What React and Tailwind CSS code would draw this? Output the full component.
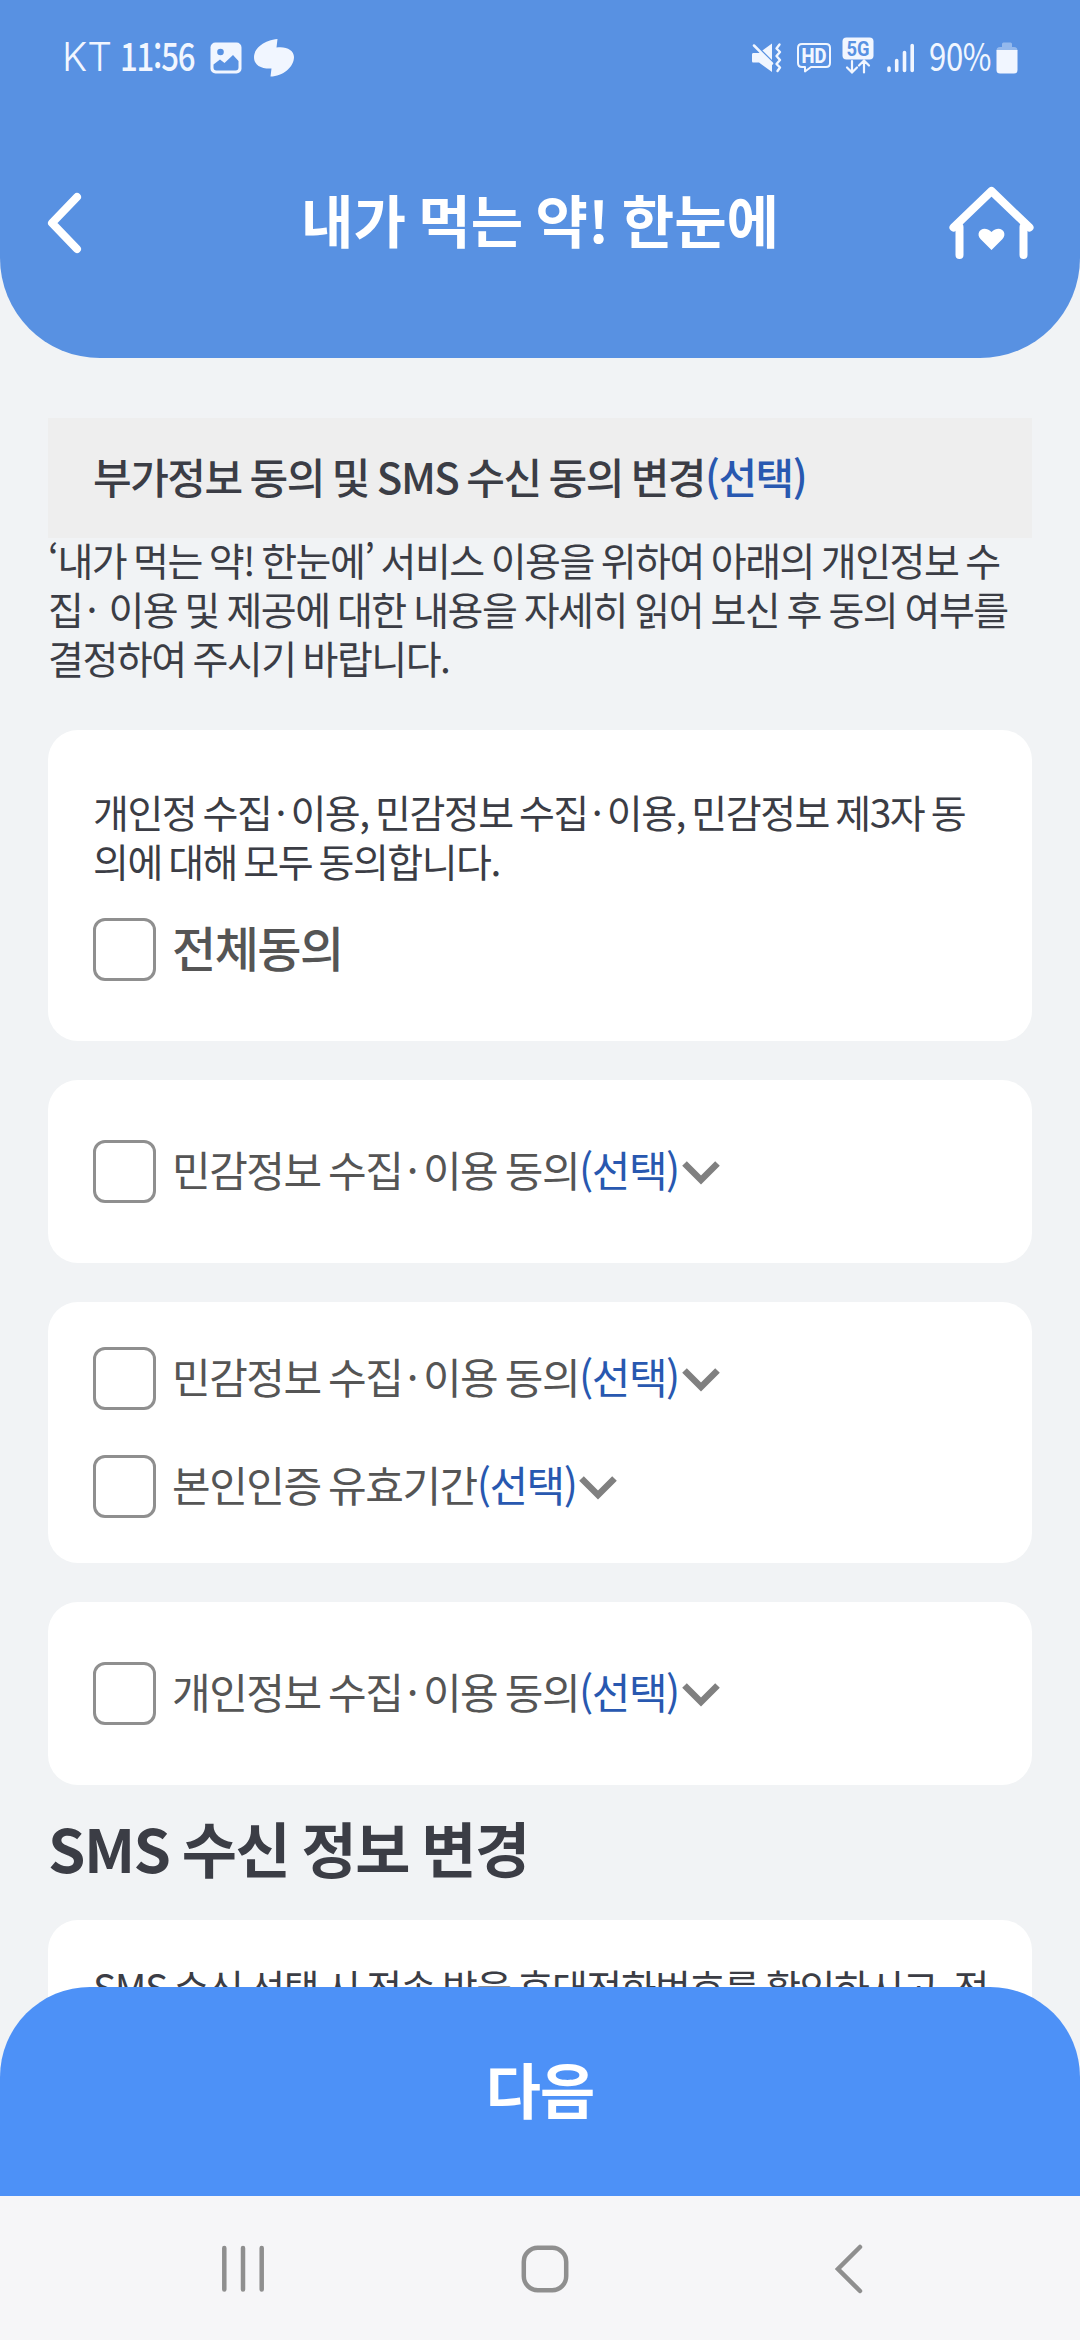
import { useState } from 'react';

const agreements = [
  {
    id: 'sensitive',
    items: [{ id: 'sensitive-1', parts: ['민감정보 수집', '이용 동의'] }],
  },
  {
    id: 'identity',
    items: [
      { id: 'sensitive-2', parts: ['민감정보 수집', '이용 동의'] },
      { id: 'valid-period', parts: ['본인인증 유효기간'] },
    ],
  },
  {
    id: 'personal',
    items: [{ id: 'personal-1', parts: ['개인정보 수집', '이용 동의'] }],
  },
];

const MutedIcon = () => (
  <svg width="32" height="32" viewBox="0 0 32 32" fill="none">
    <path d="M2 11H8L21 1.5V30L8 20.5H2Q1 20.5 1 19V12.500Q1 11 2 11Z" fill="currentColor" />
    <path d="M1 0L24 23" stroke="#5891e2" strokeWidth="3" />
    <path d="M3 3.500L21 21.500" stroke="currentColor" strokeWidth="2.500" strokeLinecap="round" />
    <path d="M28.500 2.500L25.500 6.500L29 10L25.500 14L29 18L25.500 22L29 25.500L26.500 29" stroke="currentColor" strokeWidth="2.400" strokeLinejoin="round" strokeLinecap="round" />
  </svg>
);

const HdIcon = () => (
  <svg width="36" height="32" viewBox="0 0 36 32">
    <path d="M6 2H30Q34 2 34 6V21Q34 25 30 25H15L9 29.500V25H6Q2 25 2 21V6Q2 2 6 2Z" fill="none" stroke="currentColor" strokeWidth="2" strokeLinejoin="round" />
    <text x="18" y="20.500" textAnchor="middle" fontFamily="Roboto, sans-serif" fontWeight="800" fontSize="20" textLength="25" lengthAdjust="spacingAndGlyphs" fill="currentColor">HD</text>
  </svg>
);

const FiveGIcon = () => (
  <svg width="32" height="38" viewBox="0 0 32 38">
    <rect x="0.500" y="0.500" width="31" height="22" rx="4" fill="currentColor" />
    <text x="16" y="18.500" textAnchor="middle" fontFamily="Roboto, sans-serif" fontWeight="700" fontSize="20" textLength="23" lengthAdjust="spacingAndGlyphs" fill="#5891e2">5G</text>
    <path d="M10 24V35M5 30.500L10 35.500L15 30.500M22 35.500V24M17 28.500L22 23.500L27 28.500" fill="none" stroke="currentColor" strokeWidth="2.200" strokeLinecap="round" />
  </svg>
);

const StatusBar = () => (
  <div className="flex h-[114px] items-center pt-[1px] pl-[62px] text-[#f1f6ff]">
    <span className="mb-[2px] w-[58px] font-[Inter] text-[39px] leading-none font-light">KT</span>
    <span className="mb-[5px] w-[90px] origin-left scale-x-[0.82] text-[38px] leading-none font-medium tracking-[-1.500px] whitespace-nowrap">11:56</span>
    <svg className="mt-[1px]" width="32" height="32" viewBox="0 0 32 32">
      <rect x="0.500" y="0.500" width="31" height="31" rx="5" fill="currentColor" />
      <circle cx="10.500" cy="10" r="3.300" fill="#5891e2" />
      <path d="M3.500 22.500L10 17.500L14.500 21L23 13L28.500 19V25.500Q28.500 28.500 25.500 28.500H6.500Q3.500 28.500 3.500 25.500Z" fill="#5891e2" />
    </svg>
    <svg className="ml-[12px]" width="40" height="38" viewBox="0 0 40 38">
      <path d="M23.500 0L22.500 8.500C32 7 40 11 40 18C40 28 29 37.500 16.500 37.500L17.500 29.500C8 30 0 27 0 18C0 9 11 1 23.500 0Z" fill="currentColor" />
    </svg>
    <div className="ml-auto flex items-center">
      <MutedIcon />
      <span className="ml-[13px]"><HdIcon /></span>
      <span className="ml-[10px] -mt-[4px]"><FiveGIcon /></span>
      <svg className="ml-[13px]" width="28" height="30" viewBox="0 0 28 30" stroke="currentColor" strokeWidth="3.600" strokeLinecap="round">
        <path d="M2 25V27.500M9.700 17.500V27.500M17.500 9.500V27.500M25.200 2.500V27.500" />
      </svg>
      <span className="mb-[5px] ml-[14px] w-[67px] origin-left scale-x-[0.82] text-[38px] leading-none tracking-[-0.500px] whitespace-nowrap">90%</span>
      <svg className="mr-[62px]" width="22" height="32" viewBox="0 0 22 32">
        <path d="M6 5V2Q6 0.500 7.500 0.500H14.500Q16 0.500 16 2V5H18Q21.500 5 21.500 8.500H0.500Q0.500 5 4 5Z" fill="currentColor" opacity="0.400" />
        <path d="M0.500 8H21.500V28Q21.500 31.500 18 31.500H4Q0.500 31.500 0.500 28Z" fill="currentColor" />
      </svg>
    </div>
  </div>
);

const Header = () => (
  <header className="h-[358px] shrink-0 rounded-b-[100px] bg-[#5891e2] text-white">
    <StatusBar />
    <div className="flex h-[218px] items-start justify-between px-[47px] pt-[72px]">
      <button className="w-[85px]">
        <svg className="mt-[6px]" width="36" height="62" viewBox="0 0 36 62" fill="none" stroke="currentColor" strokeWidth="8" strokeLinecap="round" strokeLinejoin="round">
          <path d="M30 5L5 31L30 57" />
        </svg>
      </button>
      <h1 className="text-[57px] leading-[64px] font-bold whitespace-nowrap [word-spacing:-3.500px]">내가 먹는 약! 한눈에</h1>
      <button className="w-[85px]">
        <svg width="86" height="74" viewBox="0 0 86 74" fill="none" stroke="currentColor" strokeWidth="8" strokeLinecap="round" strokeLinejoin="round">
          <path d="M5.500 41.500L43.500 5L81.500 41.500" />
          <path d="M11.500 41V69M75.500 41V69" />
          <path d="M43.500 64L32.500 53C26.500 46 35.500 38 43.500 46C51.500 38 60.500 46 54.500 53Z" fill="currentColor" stroke="none" />
        </svg>
      </button>
    </div>
  </header>
);

const Checkbox = ({ checked, onChange }) => (
  <input
    type="checkbox"
    checked={checked}
    onChange={onChange}
    className="size-[63px] shrink-0 appearance-none rounded-[12px] border-[3px] border-[#8f8f8f] bg-white checked:bg-[#4d91f7]"
  />
);

const Card = ({ className, children }) => (
  <section className={`rounded-[30px] bg-white px-[45px] ${className}`}>{children}</section>
);

const Dot = () => <span className="inline-block w-[0.490em] text-center tracking-normal">·</span>;

const Optional = () => <span className="text-[#2858b0]">(선택)</span>;

const AgreementRow = ({ parts, checked, onChange }) => (
  <label className="flex h-[63px] items-center">
    <Checkbox checked={checked} onChange={onChange} />
    <span className="mb-[6px] ml-[16px] text-[42px] leading-[60px] whitespace-nowrap text-[#555555] [word-spacing:-2.700px]">
      {parts[0]}
      {parts[1] && <Dot />}
      {parts[1]}
      <Optional />
    </span>
    <svg className="mt-[3px] ml-[3px]" width="38" height="24" viewBox="0 0 38 24" fill="none" stroke="#808080" strokeWidth="6.500">
      <path d="M2.500 2.500L19 19L35.500 2.500" />
    </svg>
  </label>
);

const NavigationBar = () => (
  <nav className="flex h-[144px] shrink-0 items-center bg-[#f6f6f8] pt-[2px] pl-[222px] text-[#8f8f8f]">
    <svg width="43" height="48" viewBox="0 0 43 48" stroke="currentColor" strokeWidth="4.500" strokeLinecap="round">
      <path d="M2.300 3V44.500M21 3V44.500M39.700 3V44.500" />
    </svg>
    <svg className="ml-[256px]" width="48" height="48" viewBox="0 0 48 48" fill="none" stroke="currentColor" strokeWidth="4.500">
      <rect x="2.800" y="2.800" width="42.400" height="42.400" rx="14" />
    </svg>
    <svg className="ml-[266px]" width="28" height="50" viewBox="0 0 28 50" fill="none" stroke="currentColor" strokeWidth="4.500" strokeLinecap="round">
      <path d="M25 3L3 25L25 47" />
    </svg>
  </nav>
);

const App = () => {
  const [checked, setChecked] = useState({});

  const ids = agreements.flatMap((group) => group.items.map((item) => item.id));
  const allChecked = ids.every((id) => checked[id]);

  const toggle = (id) => setChecked({ ...checked, [id]: !checked[id] });

  const toggleAll = () => {
    setChecked(Object.fromEntries(ids.map((id) => [id, !allChecked])));
  };

  return (
    <div lang="ko" className="flex h-[2340px] w-[1080px] flex-col overflow-hidden bg-[#f1f3f5] font-['Noto_Sans_CJK_KR',sans-serif] text-[#3b3d45]">
      <Header />

      <div className="relative min-h-0 flex-1">
        <main className="h-full overflow-hidden px-[48px] pt-[60px] tracking-[-1.500px] [word-spacing:-2.500px]">
          <h2 className="h-[120px] bg-[#eeeeee] pl-[45px] text-[42px] leading-[115px] font-medium whitespace-nowrap [word-spacing:-2.300px]">
            부가정보 동의 및 SMS 수신 동의 변경<Optional />
          </h2>
          <p className="-mt-[3px] text-[39px] leading-[49px] whitespace-nowrap">
            ‘내가 먹는 약! 한눈에’ 서비스 이용을 위하여 아래의 개인정보 수<br />
            집<Dot /> <span className="[word-spacing:-2px]">이용 및 제공에 대한 내용을 자세히 읽어 보신 후 동의 여부를</span><br />
            결정하여 주시기 바랍니다.
          </p>

          {/* Agree to everything */}
          <Card className="mt-[48px] h-[311px] pt-[57px]">
            <p className="text-[39px] leading-[49px] whitespace-nowrap [word-spacing:-3px]">
              개인정 수집<Dot />이용, 민감정보 수집<Dot />이용, 민감정보 제3자 동<br />
              의에 대해 모두 동의합니다.
            </p>
            <label className="mt-[33px] flex h-[63px] items-center">
              <Checkbox checked={allChecked} onChange={toggleAll} />
              <span className="mb-[7px] ml-[16px] text-[48px] leading-[60px] font-medium text-[#555555]">전체동의</span>
            </label>
          </Card>

          {/* Individual agreements */}
          {agreements.map((group) => (
            <Card
              key={group.id}
              className={`mt-[39px] flex flex-col gap-[45px] ${group.items.length > 1 ? 'py-[45px]' : 'py-[60px]'}`}
            >
              {group.items.map((item) => (
                <AgreementRow
                  key={item.id}
                  parts={item.parts}
                  checked={!!checked[item.id]}
                  onChange={() => toggle(item.id)}
                />
              ))}
            </Card>
          ))}

          <h2 className="h-[135px] pt-[17px] text-[60px] leading-[90px] font-bold [word-spacing:-3px]">SMS 수신 정보 변경</h2>
          <Card className="h-[400px] pt-[42px]">
            <p className="text-[39px] leading-[49px] whitespace-nowrap">
              SMS 수신 선택 시 전송 받을 휴대전화번호를 확인하시고, 전
            </p>
          </Card>
        </main>

        <button className="absolute bottom-0 left-0 h-[209px] w-full rounded-t-[90px] bg-[#4d91f7] pb-[8px] text-[60px] font-bold tracking-[-1px] text-white">
          다음
        </button>
      </div>

      <NavigationBar />
    </div>
  );
};

export default App;
